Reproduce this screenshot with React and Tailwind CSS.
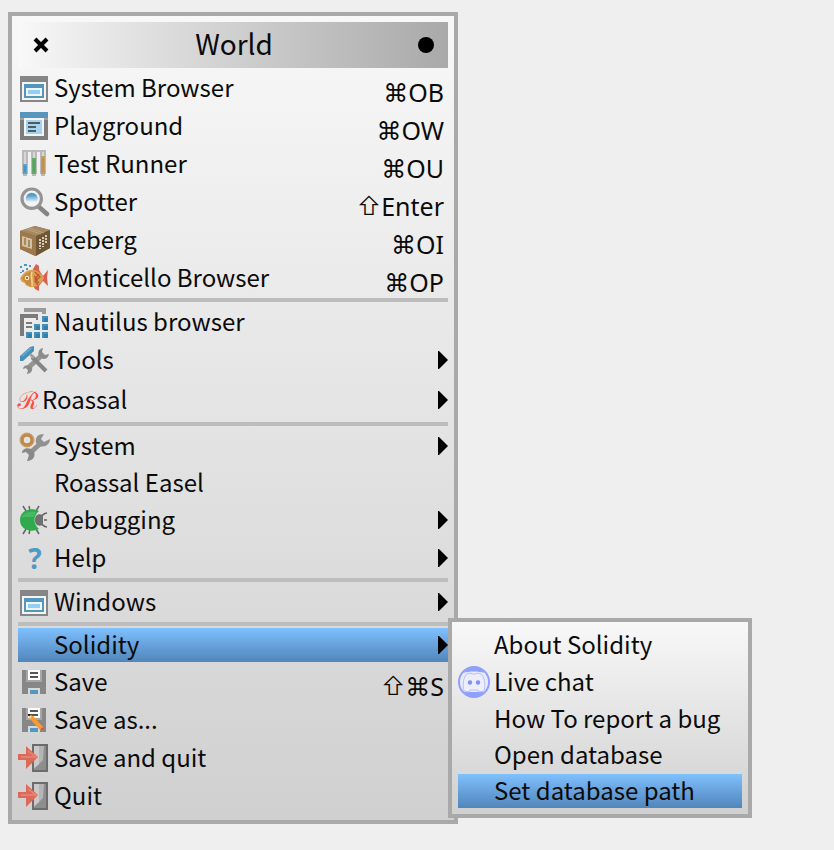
import React from "react";

const Svg = ({ children, crisp }) => (
  <svg
    viewBox="0 0 32 32"
    className="h-8 w-8 shrink-0"
    aria-hidden="true"
    shapeRendering={crisp ? "crispEdges" : "auto"}
  >
    {children}
  </svg>
);

const WindowIcon = () => (
  <Svg crisp>
    <rect x="2" y="4" width="28" height="26" fill="#868686" />
    <rect x="4" y="10" width="24" height="18" fill="#f4f4f4" />
    <rect x="6" y="12" width="20" height="14" fill="#5497bd" />
    <rect x="8" y="16" width="16" height="8" fill="#f4f4f4" />
    <rect x="10" y="18" width="12" height="4" fill="#8fd0f5" />
  </Svg>
);

const PlaygroundIcon = () => (
  <Svg crisp>
    <rect x="2" y="2" width="28" height="28" fill="#7d7d7d" />
    <rect x="2" y="2" width="28" height="6" fill="#5795bd" />
    <rect x="2" y="8" width="28" height="2" fill="#a2a2a2" />
    <rect x="6" y="8" width="20" height="18" fill="#f4f4f4" />
    <rect x="8" y="10" width="16" height="14" fill="#a3d3ef" />
    <rect x="10" y="12" width="12" height="2" fill="#525a60" />
    <rect x="10" y="16" width="8" height="2" fill="#525a60" />
    <rect x="10" y="20" width="8" height="2" fill="#525a60" />
  </Svg>
);

const TubesIcon = () => (
  <Svg crisp>
    <rect x="4" y="2" width="24" height="2" fill="#bdbdbd" />
    {[
      [4, 16, "#5ba3cf", "#4594c2"],
      [13, 10, "#61ad68", "#55a35e"],
      [22, 8, "#c99a58", "#bf9150"],
    ].map(([x, y, light, dark]) => (
      <g key={x}>
        <rect x={x} y="2" width="6" height="24" fill="#b9b9b9" />
        <rect x={x + 1} y="26" width="4" height="2" fill="#b9b9b9" />
        <rect x={x + 2} y="4" width="2" height="20" fill="#d6d6d6" />
        <rect x={x + 1} y={y} width="4" height={26 - y} fill={light} />
        <rect x={x + 2} y={y + 2} width="2" height={22 - y} fill={dark} />
      </g>
    ))}
  </Svg>
);

const SpotterIcon = () => (
  <Svg>
    <defs>
      <linearGradient id="lens" x2="0" y2="1">
        <stop offset="0.2" stopColor="#4f9bc8" />
        <stop offset="0.55" stopColor="#a8d0e6" />
        <stop offset="0.8" stopColor="#f2f6f8" />
      </linearGradient>
    </defs>
    <path d="M20.500 20.500 29 28" stroke="#858585" strokeWidth="4.500" strokeLinecap="round" />
    <circle cx="13.700" cy="12.700" r="9.700" fill="#f2f2f2" stroke="#949494" strokeWidth="3.200" />
    <circle cx="13.700" cy="12.700" r="6" fill="url(#lens)" />
  </Svg>
);

const IcebergIcon = () => (
  <Svg>
    <path d="M2 7 17 2 32 6v18L17 32 2 25z" fill="#8f7047" />
    <path d="M2 7 17 2l15 4-14 6z" fill="#a48862" />
    <path d="M2 7l16 5v20L2 25z" fill="#9c794a" />
    <path d="M18 12 32 6v18l-14 8z" fill="#6f5634" />
    <path d="M8 5l15 5M11 4l15 5" stroke="#bfa37a" strokeWidth="1" />
    <path d="M4 12l10 3v10L4 22z" fill="#d2c2a8" />
    <path d="M7 14v7M11 16v7" stroke="#9c794a" strokeWidth="1.500" />
    <path d="M22 15v10M25 13v10M28 11v9" stroke="#d8cbb6" strokeWidth="2" strokeDasharray="2 1" />
  </Svg>
);

const FishIcon = () => (
  <Svg>
    <path d="M15 7l3-5 3 2v4l4 6 5-6-1 8 1 8-5-5-4 5v5l-4-2-3-5z" fill="#d8604f" />
    <path d="M2 17c3-7 9-10 14-9 5 1 8 5 10 8-3 6-7 9-12 9-4 0-7-2-7-4l-3-1z" fill="#dfa04e" />
    <path d="M4 17c2-5 6-7 9-7-1 4 1 10 2 14-5 0-7-2-8-4z" fill="#c68a42" />
    <path d="M17 10l5 5-5 4 3 4M21 12l-4 5 4 4M16 14l3 3" stroke="#b85635" fill="none" strokeWidth="1.300" />
    <path d="M14 10c-2 4 1 9 0 14" stroke="#f3d38b" fill="none" strokeWidth="1.600" />
    <circle cx="9" cy="16" r="2.200" fill="#fff0c0" />
    <circle cx="9" cy="16" r="1" fill="#704824" />
    <g fill="#4a98bf">
      <path d="M2 4h2v2H2zM6 2h3v2H6zM4 8h2v2H4zM8 6h2v2H8zM11 3h2v2h-2zM2 10h2v1H2z" />
    </g>
  </Svg>
);

const NautilusIcon = () => (
  <Svg crisp>
    <path d="M6 2h22v6h-4V6H6z" fill="#9b9b9b" />
    <path d="M2 8h18v6h-2v-2H6v18H2z" fill="#7b7b7b" />
    <path d="M6 12h12v4h-4v8H6z" fill="#ededed" />
    <path d="M8 16h6v2H8zM8 20h6v2H8z" fill="#7b7b7b" />
    <path d="M24 10h6v6h-6zM16 18h6v6h-6zM24 18h6v6h-6zM8 26h6v6H8zM16 26h6v6h-6zM24 26h6v6h-6z" fill="#4490b8" />
    <path d="M26 12h4v4h-4zM18 20h4v4h-4zM26 20h4v4h-4zM10 28h4v4h-4zM18 28h4v4h-4zM26 28h4v4h-4z" fill="#2f80aa" />
  </Svg>
);

const ToolsIcon = () => (
  <Svg>
    <path d="M9 25 24 11" stroke="#949494" strokeWidth="5" />
    <path d="M14 13l14 14" stroke="#858585" strokeWidth="4" />
    <path d="M21 12c-2-4 1-8 4-8l-1 4 3 3 4-1c-1 5-5 6-8 4z" fill="#8c8c8c" />
    <path d="M12 22c-3-2-7 0-7 3l3-1 2 2-1 4c4 0 6-4 5-7z" fill="#8c8c8c" />
    <path d="M2 17v-5L12 3l4-1v5L5 17z" fill="#478fb7" />
    <path d="M4 12l9-8" stroke="#65a8cc" strokeWidth="2" />
    <path d="M12 10l4 4" stroke="#a0a0a0" strokeWidth="3" />
  </Svg>
);

const SystemIcon = () => (
  <Svg>
    <circle cx="9" cy="10" r="5" fill="none" stroke="#bf8a4c" strokeWidth="3.500" />
    <circle cx="9" cy="10" r="7" fill="none" stroke="#c8965c" strokeWidth="1" />
    <path d="M11 24 24 12" stroke="#919191" strokeWidth="5" />
    <path d="M18 13c-1-6 2-9 8-9l-3 5 3 3 6-3c0 5-5 9-10 7z" fill="#919191" />
    <path d="M13 19c-4-2-9 0-9 4l4-1 3 3-2 6c5 0 9-4 7-9z" fill="#888888" />
  </Svg>
);

const BugIcon = () => (
  <Svg>
    <path
      d="M5 2l3 5M11 2l1 5M21 2l-3 5M5 30l3-5M11 30l1-5M21 30l-3-5M23 12c2 0 2-3 6-3M26 16h3M23 20c2 0 2 3 6 3"
      stroke="#646464"
      strokeWidth="1.500"
      fill="none"
    />
    <path d="M25 11c-6-2-8 1-8 5s2 7 8 5z" fill="#707070" />
    <path d="M21 7C13 3 2 6 2 16s11 13 19 9c-6-5-6-13 0-18z" fill="#2fab4e" />
    <path d="M3 13c4-5 9-6 15-5l-2 5z" fill="#48b864" />
  </Svg>
);

const HelpIcon = () => (
  <span className="flex h-8 w-8 shrink-0 items-center justify-center pl-[2px] font-['Noto_Sans',sans-serif] text-[28px] leading-8 font-bold text-[#4d9ac4]">
    ?
  </span>
);

const RoassalIcon = () => (
  <span className="flex h-8 w-5 shrink-0 items-center justify-center font-['Noto_Sans',sans-serif] text-[24px] leading-8 text-[#fb4d40]">
    ℛ
  </span>
);

const Disk = () => (
  <>
    <path d="M4 4h24v24H4z" fill="#878787" />
    <path d="M8 4h16v12H8z" fill="#a7a7a7" />
    <path d="M10 4h12v10H10z" fill="#fff" />
    <path d="M12 6h8v2h-8zM12 10h8v2h-8z" fill="#555" />
    <path d="M10 22h12v6H10z" fill="#d8d8d8" />
    <path d="M12 24h8v4h-8z" fill="#4f9ac3" />
  </>
);

const SaveIcon = () => (
  <Svg crisp>
    <Disk />
  </Svg>
);

const SaveAsIcon = () => (
  <Svg>
    <Disk />
    <path d="M10 11l5 1 10 11-3 3-10-11z" fill="#fb9a2c" />
    <path d="M10 11l4 1-2 3z" fill="#f8dda5" />
    <path d="M10 10h2v2h-2z" fill="#222" />
    <path d="M23 24h3v2h-3z" fill="#f04b4b" />
  </Svg>
);

const QuitIcon = () => (
  <Svg>
    <path d="M14 2h16v28H14z" fill="#6c6c6c" />
    <path d="M16 4h12v24H16z" fill="#8e8e8e" />
    <path d="M16 4h10l-1 14-9 9z" fill="#b5b5b5" />
    <path d="M16 4h5v18l-5 4z" fill="#c9c9c9" />
    <path d="M0 12h8V4l12 11L8 27v-9H0z" fill="#dc6a5b" />
    <path d="M10 9l8 6H3" stroke="#e7877b" strokeWidth="1.500" fill="none" />
  </Svg>
);

const ChatIcon = () => (
  <Svg>
    <circle cx="16" cy="16" r="15" fill="#e9ebfb" stroke="#8ea0fb" strokeWidth="2" />
    <path d="M5 7c6-8 16-8 22 0-7-2-15-2-22 0zM6 26c6 7 14 7 20 0l-5-1-1 1h-8l-1-1z" fill="#8ea0fb" />
    <path d="M6 25C4 18 6 10 9 8l4-1 1 1h4l1-1 4 1c3 2 5 10 3 17l-5 1-1-2h-8l-1 2z" fill="#eeeef8" stroke="#b5c0fb" strokeWidth="1" />
    <circle cx="12" cy="16.500" r="2.200" fill="#7b90fb" />
    <circle cx="20" cy="16.500" r="2.200" fill="#7b90fb" />
  </Svg>
);

const Arrow = () => (
  <svg viewBox="0 0 10 18" className="h-[18px] w-[10px] shrink-0" aria-hidden="true">
    <path d="M0 0h1l9 9-9 9H0z" fill="#000" />
  </svg>
);

const Separator = () => <div role="separator" className="h-1 bg-[#bdbdbd]" />;

function Item({ icon: Icon, label, shift, keys, arrow, selected, height = "h-9" }) {
  return (
    <button
      type="button"
      role="menuitem"
      className={`flex w-full items-center gap-1 text-left ${height} ${
        selected ? "bg-linear-to-b from-[#7fc0ff] to-[#5186bb]" : ""
      }`}
    >
      {Icon ? <Icon /> : <span className="w-8 shrink-0" />}
      <span className="flex-1 pb-[3px] whitespace-nowrap">{label}</span>
      {(keys || shift) && (
        <span className="flex items-center self-end pr-1 pb-[2px] font-['Noto_Sans','DejaVu_Sans',sans-serif] text-[25px] leading-6">
          {shift && <span className="font-['Inter',sans-serif] font-light">⇧</span>}
          <span>{keys}</span>
        </span>
      )}
      {arrow && <Arrow />}
    </button>
  );
}

const panel =
  "flex flex-col gap-[2px] border-4 border-[#a9a9a9] bg-linear-to-b from-[#f8f8f8] to-[#d0d0d0] p-[6px]";

export default function App() {
  return (
    <main className="min-h-screen bg-[#efefef] px-2 py-3 font-['Noto_Sans_CJK_JP',sans-serif] text-[24px] leading-8 text-[#0b0b0b]">
      <div role="menu" aria-label="World" className={`${panel} w-[450px]`}>
        <header className="flex h-[46px] items-center justify-between bg-linear-to-r from-[#f8f8f8] to-[#a9a9a9] px-[14px]">
          <button type="button" aria-label="Close" className="flex w-[18px] justify-center">
            <svg viewBox="0 0 16 16" className="h-4 w-4">
              <path d="M2 2l12 12M14 2 2 14" stroke="#000" strokeWidth="4" />
            </svg>
          </button>
          <h1 className="pb-1 text-[28px]">World</h1>
          <button type="button" aria-label="Pin" className="h-4 w-4 rounded-full bg-black" />
        </header>
        <Item icon={WindowIcon} label="System Browser" keys="⌘OB" />
        <Item icon={PlaygroundIcon} label="Playground" keys="⌘OW" />
        <Item icon={TubesIcon} label="Test Runner" keys="⌘OU" />
        <Item icon={SpotterIcon} label="Spotter" shift keys="Enter" />
        <Item icon={IcebergIcon} label="Iceberg" keys="⌘OI" />
        <Item icon={FishIcon} label="Monticello Browser" keys="⌘OP" />
        <Separator />
        <Item icon={NautilusIcon} label="Nautilus browser" />
        <Item icon={ToolsIcon} label="Tools" arrow />
        <Item icon={RoassalIcon} label="Roassal" arrow height="h-10" />
        <Separator />
        <Item icon={SystemIcon} label="System" arrow />
        <Item label="Roassal Easel" height="h-[34px]" />
        <Item icon={BugIcon} label="Debugging" arrow />
        <Item icon={HelpIcon} label="Help" arrow />
        <Separator />
        <Item icon={WindowIcon} label="Windows" arrow />
        <Separator />
        <div className="relative">
          <Item label="Solidity" arrow selected height="h-[34px]" />
          <div role="menu" aria-label="Solidity" className={`${panel} absolute -top-[10px] left-full w-[304px]`}>
            <Item label="About Solidity" height="h-[34px]" />
            <Item icon={ChatIcon} label="Live chat" />
            <Item label="How To report a bug" height="h-[34px]" />
            <Item label="Open database" height="h-[34px]" />
            <Item label="Set database path" selected height="h-[34px]" />
          </div>
        </div>
        <Item icon={SaveIcon} label="Save" shift keys="⌘S" />
        <Item icon={SaveAsIcon} label="Save as..." />
        <Item icon={QuitIcon} label="Save and quit" />
        <Item icon={QuitIcon} label="Quit" />
      </div>
    </main>
  );
}
